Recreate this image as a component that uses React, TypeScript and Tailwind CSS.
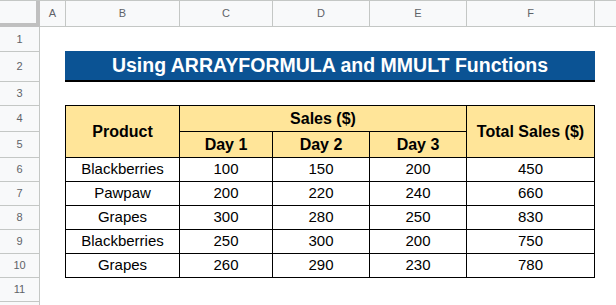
const columns = [
  { label: 'A', w: 'w-[26px]' },
  { label: 'B', w: 'w-[114px]' },
  { label: 'C', w: 'w-[93px]' },
  { label: 'D', w: 'w-[97px]' },
  { label: 'E', w: 'w-[97px]' },
  { label: 'F', w: 'w-[128px]' },
];

// heights incl. the bottom grid line; last row is only partly on screen
const rowHeights = [
  'h-[25px]',
  'h-[30px]',
  'h-[24px]',
  'h-[26px]',
  'h-[26px]',
  'h-[24px]',
  'h-[24px]',
  'h-[24px]',
  'h-[24px]',
  'h-[24px]',
  'h-[24px]',
  'h-[24px]',
];

const sales = [
  { product: 'Blackberries', days: [100, 150, 200], total: 450 },
  { product: 'Pawpaw', days: [200, 220, 240], total: 660 },
  { product: 'Grapes', days: [300, 280, 250], total: 830 },
  { product: 'Blackberries', days: [250, 300, 200], total: 750 },
  { product: 'Grapes', days: [260, 290, 230], total: 780 },
];

const headCell = 'bg-[#ffe599] flex items-center justify-center font-bold text-[16px] text-black';
const bodyCell = 'bg-white flex items-center justify-center text-[15px] text-black';

const App = () => {
  return (
    <div className="w-[616px] h-[305px] overflow-hidden bg-white font-['Liberation_Sans',Arial,sans-serif]">
      {/* column letters */}
      <div className="flex h-[27px] border-t border-[#c4c7c5]">
        <div className="w-[40px] shrink-0 bg-[#f8f9fa] border-r-4 border-b-4 border-[#c0c0c0]" />
        {columns.map((col) => (
          <div
            key={col.label}
            className={`${col.w} shrink-0 bg-[#f8f9fa] border-r border-b border-[#c4c7c5] flex items-center justify-center text-[11px] text-[#5f6368]`}
          >
            {col.label}
          </div>
        ))}
        <div className="flex-1 bg-[#f8f9fa] border-b border-[#c4c7c5]" />
      </div>

      <div className="flex">
        {/* row numbers */}
        <div className="w-[40px] shrink-0 flex flex-col">
          {rowHeights.map((h, i) => (
            <div
              key={i}
              className={`${h} shrink-0 bg-[#f8f9fa] border-r border-b border-[#c4c7c5] flex items-center justify-center text-[11px] text-[#5f6368]`}
            >
              {i < 11 ? i + 1 : ''}
            </div>
          ))}
        </div>

        {/* sheet body */}
        <div className="pl-[25px] pt-[24px]">
          <div className="w-[530px] h-[31px] bg-[#0b5394] border-b-2 border-black flex items-center justify-center text-white font-bold text-[19.5px]">
            Using ARRAYFORMULA and MMULT Functions
          </div>

          <div className="mt-[23px] w-[530px] grid grid-cols-[113px_92px_96px_96px_127px] grid-rows-[25px_25px_23px_23px_23px_23px_23px] gap-px p-px bg-black">
            <div className={`${headCell} row-span-2`}>Product</div>
            <div className={`${headCell} col-span-3`}>Sales ($)</div>
            <div className={`${headCell} row-span-2`}>Total Sales ($)</div>
            <div className={headCell}>Day 1</div>
            <div className={headCell}>Day 2</div>
            <div className={headCell}>Day 3</div>
            {sales.map((row, i) => (
              <div key={i} className="contents">
                <div className={bodyCell}>{row.product}</div>
                {row.days.map((d, j) => (
                  <div key={j} className={bodyCell}>
                    {d}
                  </div>
                ))}
                <div className={bodyCell}>{row.total}</div>
              </div>
            ))}
          </div>
        </div>
      </div>
    </div>
  );
};

export default App;
